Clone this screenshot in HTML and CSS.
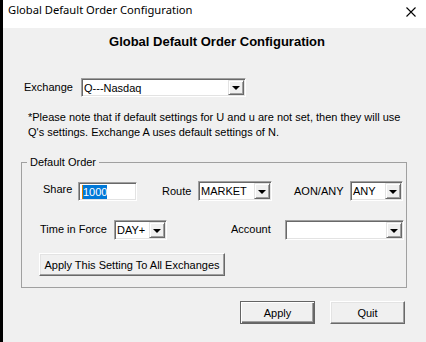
FILE: index.html
```html
<!DOCTYPE html>
<html>
<head>
<meta charset="utf-8">
<link rel="stylesheet" href="styles.css">
</head>
<body>
<div class="frame">
  <div class="edge"></div>
  <div class="window">
    <div class="titlebar">
      <span class="title">Global Default Order Configuration</span>
      <svg class="close" width="10" height="10" viewBox="0 0 10 10"><path d="M0.5 0.5 L9.5 9.5 M9.5 0.5 L0.5 9.5" stroke="#000" stroke-width="1.1" fill="none"/></svg>
    </div>
    <div class="content">
      <h1 class="heading">Global Default Order Configuration</h1>
      <div class="exrow">
        <span class="lbl lbl-ex">Exchange</span>
        <div class="combo combo-ex"><span class="val">Q---Nasdaq</span><span class="drop"><i class="tri"></i></span></div>
      </div>
      <p class="note">*Please note that if default settings for U and u are not set, then they will use<br>Q's settings. Exchange A uses default settings of N.</p>
      <fieldset class="group">
        <legend>Default Order</legend>
        <div class="row row1">
          <span class="lbl lbl-share">Share</span>
          <div class="edit"><span class="sel">1000</span></div>
          <span class="lbl lbl-route">Route</span>
          <div class="combo combo-route"><span class="val">MARKET</span><span class="drop"><i class="tri"></i></span></div>
          <span class="lbl lbl-aon">AON/ANY</span>
          <div class="combo combo-aon"><span class="val">ANY</span><span class="drop"><i class="tri"></i></span></div>
        </div>
        <div class="row row2">
          <span class="lbl lbl-tif">Time in Force</span>
          <div class="combo combo-tif"><span class="val">DAY+</span><span class="drop"><i class="tri"></i></span></div>
          <span class="lbl lbl-acct">Account</span>
          <div class="combo combo-acct"><span class="val"></span><span class="drop"><i class="tri"></i></span></div>
        </div>
        <button class="btn btn-all">Apply This Setting To All Exchanges</button>
      </fieldset>
      <div class="actions">
        <button class="btn btn-default">Apply</button>
        <button class="btn btn-quit">Quit</button>
      </div>
    </div>
  </div>
</div>
</body>
</html>
```
FILE: styles.css
```css
html, body {
  margin: 0;
  padding: 0;
}
body {
  width: 426px;
  height: 342px;
  overflow: hidden;
  background: #f0f0f0;
  font-family: "Liberation Sans", Arial, sans-serif;
  font-size: 11px;
  color: #000;
}
.frame {
  display: flex;
  height: 342px;
}
.edge {
  width: 3px;
  background: #000;
  flex: none;
}
.window {
  flex: 1;
  display: flex;
  flex-direction: column;
  background: #f0f0f0;
}
.titlebar {
  height: 28px;
  background: #fff;
  display: flex;
  align-items: flex-start;
  justify-content: space-between;
  box-sizing: border-box;
  padding: 2px 0 0 5px;
}
.title {
  font-family: "Noto Sans", "Open Sans", sans-serif;
  font-size: 11.2px;
  line-height: 16px;
}
.close {
  margin: 5px 10px 0 0;
}
.content {
  display: flex;
  flex-direction: column;
}
.heading {
  margin: 6px 0 0 5px;
  font-size: 13px;
  line-height: 15px;
  font-weight: bold;
  text-align: center;
}
.exrow {
  margin-top: 29px;
  display: flex;
  align-items: center;
}
.lbl {
  line-height: 13px;
  white-space: nowrap;
}
.lbl-ex { margin-left: 21px; width: 57px; }
.combo {
  box-sizing: border-box;
  height: 20px;
  background: #fff;
  border-top: 1px solid #a0a0a0;
  border-left: 1px solid #a0a0a0;
  border-bottom: 1px solid #fff;
  border-right: 1px solid #fff;
  box-shadow: inset 1px 1px 0 #696969, inset -1px -1px 0 #e3e3e3;
  display: flex;
  align-items: stretch;
  padding: 1px;
}
.val {
  flex: 1;
  line-height: 16px;
  padding-left: 1px;
  white-space: nowrap;
  overflow: hidden;
}
.drop {
  width: 16px;
  flex: none;
  box-sizing: border-box;
  background: #f0f0f0;
  border-top: 1px solid #e3e3e3;
  border-left: 1px solid #e3e3e3;
  border-right: 1px solid #696969;
  border-bottom: 1px solid #696969;
  box-shadow: inset 1px 1px 0 #fff, inset -1px -1px 0 #a0a0a0;
  display: flex;
  align-items: center;
  justify-content: center;
}
.tri {
  width: 0;
  height: 0;
  border-left: 4px solid transparent;
  border-right: 4px solid transparent;
  border-top: 4px solid #000;
  margin-top: 1px;
}
.combo-ex { width: 165px; height: 19px; }
.note {
  margin: 13px 0 0 25px;
  line-height: 15px;
}
.group {
  margin: 15px 19px 0 18px;
  padding: 0 0 11px 0;
  border: 1px solid #a0a0a0;
  min-width: 0;
}
.group legend {
  margin-left: 5px;
  padding: 0 3px;
  font-size: 11px;
  line-height: 14px;
}
.row {
  display: flex;
  align-items: center;
}
.row1 { margin-top: 12px; }
.row2 { margin-top: 19px; }
.edit {
  box-sizing: border-box;
  height: 19px;
  width: 59px;
  background: #fff;
  border-top: 1px solid #a0a0a0;
  border-left: 1px solid #a0a0a0;
  border-bottom: 1px solid #fff;
  border-right: 1px solid #fff;
  box-shadow: inset 1px 1px 0 #696969, inset -1px -1px 0 #e3e3e3;
  padding: 2px 0 0 3px;
}
.sel {
  display: inline-block;
  background: #0078d7;
  color: #fff;
  line-height: 14px;
  border-left: 1px solid #e08000;
}
.lbl-share { margin-left: 21px; width: 35px; margin-top: -3px; }
.lbl-route { margin-left: 25px; width: 36px; }
.combo-route { width: 74px; }
.lbl-aon { margin-left: 22px; width: 56px; }
.combo-aon { width: 53px; }
.lbl-tif { margin-left: 18px; width: 74px; margin-top: -2px; }
.combo-tif { width: 53px; }
.lbl-acct { margin-left: 64px; width: 54px; margin-top: -2px; }
.combo-acct { width: 119px; }
.btn {
  font-family: "Liberation Sans", Arial, sans-serif;
  font-size: 11px;
  color: #000;
  background: #f0f0f0;
  box-sizing: border-box;
  border-top: 1px solid #fff;
  border-left: 1px solid #fff;
  border-right: 1px solid #696969;
  border-bottom: 1px solid #696969;
  box-shadow: inset -1px -1px 0 #a0a0a0, inset 1px 1px 0 #e3e3e3;
  padding: 0;
  height: 23px;
}
.btn-all {
  margin: 13px 0 0 17px;
  width: 186px;
}
.actions {
  margin-top: 13px;
  display: flex;
  justify-content: flex-end;
  gap: 15px;
  padding-right: 21px;
}
.btn-default, .btn-quit {
  width: 75px;
}
.btn-default {
  border: 1px solid #646464;
  box-shadow: inset 1px 1px 0 #fff, inset -1px -1px 0 #696969, inset -2px -2px 0 #a0a0a0;
}
```
